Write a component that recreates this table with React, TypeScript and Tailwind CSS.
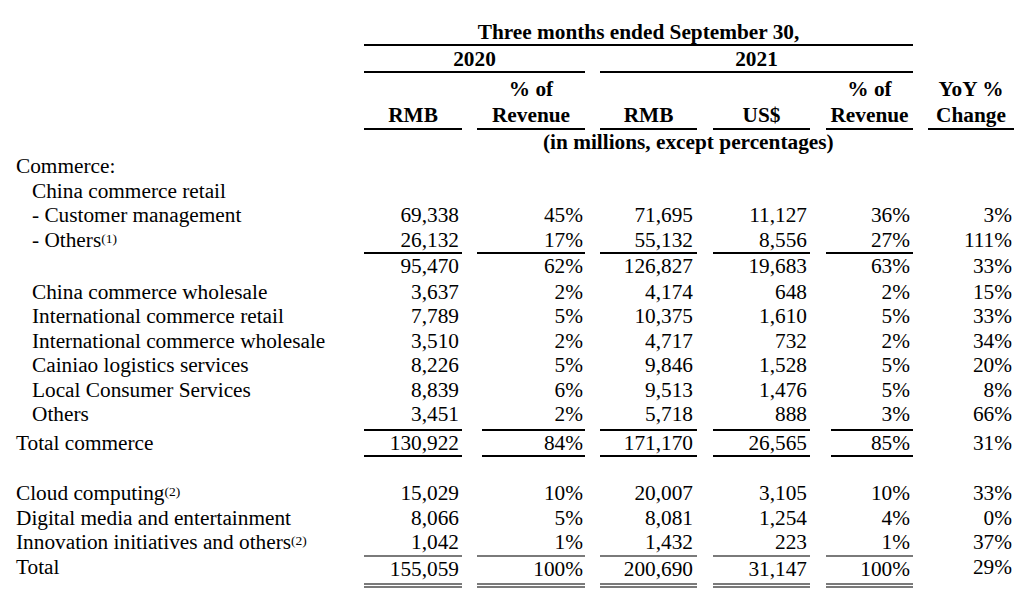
import React from 'react';

type Rule = 'none' | 'sub' | 'total' | 'grand';

interface Line {
  label?: React.ReactNode;
  deep?: boolean;
  values?: string[];
  rule?: Rule;
  space?: string;
}

// column boxes: width + gap to the previous column
const cols = [
  'w-[98px]',
  'ml-[15px] w-[108px]',
  'ml-[15px] w-[97px]',
  'ml-[16px] w-[97px]',
  'ml-[16px] w-[87px]',
  'ml-[15px] w-[86px]',
];
const pads = ['pr-[3px]', 'pr-[2px]', 'pr-[4px]', 'pr-[3px]', 'pr-[3px]', 'pr-[2px]'];

function Note({ n }: { n: number }) {
  return <sup className="-top-[4px] text-[13.5px]">({n})</sup>;
}

const lines: Line[] = [
  { label: 'Commerce:' },
  { label: 'China commerce retail', deep: true },
  { label: '- Customer management', deep: true, values: ['69,338', '45%', '71,695', '11,127', '36%', '3%'] },
  { label: <>- Others<Note n={1} /></>, deep: true, values: ['26,132', '17%', '55,132', '8,556', '27%', '111%'] },
  { values: ['95,470', '62%', '126,827', '19,683', '63%', '33%'], rule: 'sub' },
  { label: 'China commerce wholesale', deep: true, values: ['3,637', '2%', '4,174', '648', '2%', '15%'], space: 'mt-[1px]' },
  { label: 'International commerce retail', deep: true, values: ['7,789', '5%', '10,375', '1,610', '5%', '33%'] },
  { label: 'International commerce wholesale', deep: true, values: ['3,510', '2%', '4,717', '732', '2%', '34%'] },
  { label: 'Cainiao logistics services', deep: true, values: ['8,226', '5%', '9,846', '1,528', '5%', '20%'] },
  { label: 'Local Consumer Services', deep: true, values: ['8,839', '6%', '9,513', '1,476', '5%', '8%'] },
  { label: 'Others', deep: true, values: ['3,451', '2%', '5,718', '888', '3%', '66%'] },
  { label: 'Total commerce', values: ['130,922', '84%', '171,170', '26,565', '85%', '31%'], rule: 'total', space: 'mt-[2px]' },
  { label: <>Cloud computing<Note n={2} /></>, values: ['15,029', '10%', '20,007', '3,105', '10%', '33%'], space: 'mt-[24px]' },
  { label: 'Digital media and entertainment', values: ['8,066', '5%', '8,081', '1,254', '4%', '0%'] },
  { label: <>Innovation initiatives and others<Note n={2} /></>, values: ['1,042', '1%', '1,432', '223', '1%', '37%'] },
  { label: 'Total', values: ['155,059', '100%', '200,690', '31,147', '100%', '29%'], rule: 'grand' },
];

function ruleFor(rule: Rule, i: number) {
  if (rule === 'sub') return i < 5 ? 'border-t-2 border-black' : 'border-t-2 border-transparent';
  if (rule === 'total') return i < 5 ? 'border-y-2 border-black' : 'border-y-2 border-transparent';
  if (rule === 'grand')
    return i < 5
      ? 'border-t-2 border-t-[#7a7a7a] border-b-[5px] border-double border-b-[#7a7a7a] pb-[2px]'
      : 'pb-[2px]';
  return '';
}

function labelRule(rule: Rule) {
  if (rule === 'sub') return 'border-t-2 border-transparent';
  if (rule === 'total') return 'border-y-2 border-transparent';
  return '';
}

function DataRow({ line }: { line: Line }) {
  const rule = line.rule ?? 'none';
  return (
    <div className={`flex ${line.space ?? ''}`}>
      <div className={`w-[364px] shrink-0 ${line.deep ? 'pl-[32px]' : 'pl-[16px]'} ${labelRule(rule)}`}>
        {line.label}
      </div>
      {line.values?.map((v, i) => (
        <div key={i} className={`shrink-0 ${cols[i]}`}>
          <div
            className={`h-full text-right ${pads[i]} ${ruleFor(rule, i)} ${
              rule === 'total' && (i === 1 || i === 4) ? 'ml-[5px]' : ''
            }`}
          >
            {v}
          </div>
        </div>
      ))}
    </div>
  );
}

const heads: string[][] = [
  ['RMB'],
  ['% of', 'Revenue'],
  ['RMB'],
  ['US$'],
  ['% of', 'Revenue'],
  ['YoY %', 'Change'],
];

export default function App() {
  return (
    <div className="h-[596px] w-[1024px] overflow-hidden bg-white pt-[20px] font-['Liberation_Serif',serif] text-[21.3px] leading-[24.5px] text-black">
      {/* header */}
      <div className="flex font-bold leading-[24px]">
        <div className="w-[364px] shrink-0" />
        <div className="w-[549px] border-b-2 border-black text-center">Three months ended September 30,</div>
      </div>
      <div className="flex font-bold leading-[24px]">
        <div className="w-[364px] shrink-0" />
        <div className="w-[221px] border-b-2 border-black pt-[1px] text-center">2020</div>
        <div className="ml-[15px] w-[313px] border-b-2 border-black pt-[1px] text-center">2021</div>
      </div>
      <div className="flex font-bold leading-[26px]">
        <div className="w-[364px] shrink-0" />
        {heads.map((h, i) => (
          <div
            key={i}
            className={`flex shrink-0 flex-col justify-end border-b-2 border-black pt-[3px] text-center ${cols[i]}`}
          >
            {h.map((t) => (
              <div key={t}>{t}</div>
            ))}
          </div>
        ))}
      </div>
      <div className="pl-[543px] font-bold leading-[24px]">(in millions, except percentages)</div>

      {/* body */}
      {lines.map((l, i) => (
        <DataRow key={i} line={l} />
      ))}
    </div>
  );
}
